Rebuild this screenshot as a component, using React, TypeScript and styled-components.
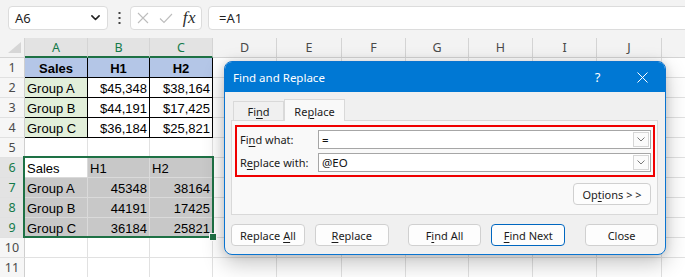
import React from "react";
import styled, { createGlobalStyle } from "styled-components";

const GlobalStyle = createGlobalStyle`
  html, body { margin: 0; padding: 0; background: #fff; }
  body { width: 685px; height: 277px; overflow: hidden; font-family: "Noto Sans", sans-serif; }
`;

const Screen = styled.div`
  position: relative;
  width: 685px;
  height: 277px;
  overflow: hidden;
  background: #fff;
  display: flex;
  flex-direction: column;
`;

/* ---------- formula bar ---------- */
const Toolbar = styled.div`
  height: 38px;
  flex: none;
  box-sizing: border-box;
  background: #f3f3f3;
  display: flex;
  align-items: flex-start;
  padding: 6px 0 0 8px;
`;

const Box = styled.div`
  height: 24px;
  box-sizing: border-box;
  background: #fff;
  border: 1px solid #dcdcdc;
  border-radius: 4px;
  display: flex;
  align-items: center;
`;

const NameBox = styled(Box)`
  width: 100px;
  flex: none;
  justify-content: space-between;
  padding: 0 7px 0 6px;
  font: 13px "Noto Sans", sans-serif;
  color: #1f1f1f;
`;

const DotsSlot = styled.div`
  width: 22px;
  height: 24px;
  flex: none;
  display: flex;
  align-items: center;
  justify-content: center;
`;

const FxBox = styled(Box)`
  width: 72px;
  flex: none;
`;

const IconSlot = styled.div`
  width: 24px;
  height: 22px;
  display: flex;
  align-items: center;
  justify-content: center;
`;

const FxText = styled.span`
  font: italic 17px "Liberation Serif", "DejaVu Serif", serif;
  color: #2b2b2b;
  letter-spacing: 0.5px;
`;

const FormulaInput = styled(Box)`
  flex: 1;
  margin-left: 6px;
  margin-right: -12px;
  padding-left: 10px;
  font: 13px "Noto Sans", sans-serif;
  color: #1f1f1f;
`;

/* ---------- sheet ---------- */
const colWidths = [63, 62, 63, 64, 65, 64, 63, 64, 64, 65, 40];
const colLetters = ["A", "B", "C", "D", "E", "F", "G", "H", "I", "J", ""];

const Sheet = styled.div`
  display: grid;
  grid-template-columns: 25px ${colWidths.map((w) => `${w}px`).join(" ")};
  grid-template-rows: 20px repeat(11, 20px);
  flex: none;
`;

const Corner = styled.div`
  grid-row: 1;
  grid-column: 1;
  box-sizing: border-box;
  background: #f3f3f3;
  border-right: 1px solid #d4d4d4;
  border-bottom: 1px solid #d4d4d4;
  display: flex;
  align-items: flex-end;
  justify-content: flex-end;
  padding: 0 3px 4px 0;
`;

const ColHeader = styled.div<{ $selected?: boolean; $col: number }>`
  grid-row: 1;
  grid-column: ${(p) => p.$col};
  box-sizing: border-box;
  display: flex;
  align-items: center;
  justify-content: center;
  background: ${(p) => (p.$selected ? "#e3e3e3" : "#f3f3f3")};
  color: ${(p) => (p.$selected ? "#137a4a" : "#4a4a4a")};
  border-right: 1px solid #d4d4d4;
  border-bottom: ${(p) => (p.$selected ? "2px solid #1e7145" : "1px solid #d4d4d4")};
  font: 12.5px "Noto Sans", sans-serif;
`;

const RowHeader = styled.div<{ $selected?: boolean; $row: number }>`
  grid-row: ${(p) => p.$row};
  grid-column: 1;
  box-sizing: border-box;
  display: flex;
  align-items: center;
  justify-content: center;
  background: ${(p) => (p.$selected ? "#e3e3e3" : "#f6f6f6")};
  color: ${(p) => (p.$selected ? "#137a4a" : "#4a4a4a")};
  border-right: 1px solid #cfcfcf;
  border-bottom: 1px solid #e1e1e1;
  font: 12.5px "Noto Sans", sans-serif;
`;

type Align = "left" | "center" | "right";

const Cell = styled.div<{
  $row: number;
  $col: number;
  $bg?: string;
  $align?: Align;
  $bold?: boolean;
  $boxed?: boolean;
  $sel?: boolean;
}>`
  grid-row: ${(p) => p.$row};
  grid-column: ${(p) => p.$col};
  box-sizing: border-box;
  display: flex;
  align-items: center;
  justify-content: ${(p) =>
    p.$align === "right" ? "flex-end" : p.$align === "center" ? "center" : "flex-start"};
  padding: 1px 2px 0 2px;
  background: ${(p) => p.$bg ?? (p.$sel ? "#c8c8c8" : "#fff")};
  border-right: 1px solid ${(p) => (p.$boxed ? "#000" : p.$sel ? "#dadada" : "#e1e1e1")};
  border-bottom: 1px solid ${(p) => (p.$boxed ? "#000" : p.$sel ? "#dadada" : "#e1e1e1")};
  font: ${(p) => (p.$bold ? 700 : 400)} 13px "Liberation Sans", Arial, sans-serif;
  color: #000;
  white-space: nowrap;
  overflow: hidden;
`;

const SelectionFrame = styled.div`
  grid-column: 2 / 5;
  grid-row: 7 / 11;
  margin: -2px -1px 0 -2px;
  border: 2px solid #1e7145;
  position: relative;
  pointer-events: none;
  z-index: 1;
`;

const FillHandle = styled.div`
  position: absolute;
  right: -5px;
  bottom: -5px;
  width: 6px;
  height: 6px;
  background: #1e7145;
  border: 1px solid #fff;
`;

type CellData = {
  t?: string;
  align?: Align;
  bold?: boolean;
  bg?: string;
  boxed?: boolean;
  sel?: boolean;
};

const BLUE = "#b4c6e7";
const GREEN = "#e2efda";

const data: Record<number, CellData[]> = {
  1: [
    { t: "Sales", align: "center", bold: true, bg: BLUE, boxed: true },
    { t: "H1", align: "center", bold: true, bg: BLUE, boxed: true },
    { t: "H2", align: "center", bold: true, bg: BLUE, boxed: true },
  ],
  2: [
    { t: "Group A", bg: GREEN, boxed: true },
    { t: "$45,348", align: "right", boxed: true },
    { t: "$38,164", align: "right", boxed: true },
  ],
  3: [
    { t: "Group B", bg: GREEN, boxed: true },
    { t: "$44,191", align: "right", boxed: true },
    { t: "$17,425", align: "right", boxed: true },
  ],
  4: [
    { t: "Group C", bg: GREEN, boxed: true },
    { t: "$36,184", align: "right", boxed: true },
    { t: "$25,821", align: "right", boxed: true },
  ],
  6: [
    { t: "Sales", sel: true, bg: "#fff" },
    { t: "H1", sel: true },
    { t: "H2", sel: true },
  ],
  7: [
    { t: "Group A", sel: true },
    { t: "45348", align: "right", sel: true },
    { t: "38164", align: "right", sel: true },
  ],
  8: [
    { t: "Group B", sel: true },
    { t: "44191", align: "right", sel: true },
    { t: "17425", align: "right", sel: true },
  ],
  9: [
    { t: "Group C", sel: true },
    { t: "36184", align: "right", sel: true },
    { t: "25821", align: "right", sel: true },
  ],
};

/* ---------- dialog ---------- */
const Dialog = styled.div`
  position: absolute;
  left: 224px;
  top: 61px;
  width: 442px;
  height: 194px;
  box-sizing: border-box;
  border: 1px solid #0a74d0;
  border-radius: 8px;
  background: #f0f0f0;
  box-shadow: 0 8px 22px rgba(0, 0, 0, 0.24), 0 0 8px rgba(0, 0, 0, 0.12);
  display: flex;
  flex-direction: column;
  overflow: hidden;
  z-index: 2;
  font: 11px "Noto Sans", sans-serif;
  color: #1b1b1b;
`;

const TitleBar = styled.div`
  height: 30px;
  flex: none;
  background: #0078d4;
  color: #fff;
  display: flex;
  align-items: center;
  padding-left: 8px;
`;

const Title = styled.div`
  flex: 1;
  font-size: 11.5px;
  padding-top: 1px;
`;

const CaptionButton = styled.div`
  width: 45px;
  height: 30px;
  display: flex;
  align-items: center;
  justify-content: center;
  font-size: 13px;
  color: #fff;
`;

const Body = styled.div`
  flex: 1;
  display: flex;
  flex-direction: column;
  padding: 7px 7px 0 6px;
`;

const TabRow = styled.div`
  height: 22px;
  display: flex;
  align-items: flex-end;
  padding-left: 2px;
  margin-bottom: -1px;
  position: relative;
  z-index: 1;
`;

const Tab = styled.div<{ $active?: boolean; $w: number }>`
  width: ${(p) => p.$w}px;
  height: ${(p) => (p.$active ? 22 : 20)}px;
  box-sizing: border-box;
  border: 1px solid #d9d9d9;
  border-bottom: ${(p) => (p.$active ? "none" : "1px solid #d9d9d9")};
  background: ${(p) => (p.$active ? "#f9f9f9" : "#f0f0f0")};
  display: flex;
  align-items: center;
  justify-content: center;
  padding-top: ${(p) => (p.$active ? 1 : 0)}px;
`;

const Panel = styled.div`
  height: 95px;
  box-sizing: border-box;
  border: 1px solid #d9d9d9;
  background: #f9f9f9;
  padding: 4px 2px 0 3px;
  display: flex;
  flex-direction: column;
`;

const Highlight = styled.div`
  border: 2px solid #f00000;
  padding: 3px 2px 3px 3px;
  display: grid;
  grid-template-columns: 78px 1fr;
  row-gap: 4px;
  align-items: center;
`;

const Label = styled.div`
  white-space: nowrap;
`;

const Combo = styled.div`
  height: 19px;
  box-sizing: border-box;
  border: 1px solid #a6a6a6;
  background: #fff;
  display: flex;
  align-items: stretch;
`;

const ComboText = styled.div`
  flex: 1;
  padding-left: 3px;
  display: flex;
  align-items: center;
  font-size: 11.5px;
  color: #111;
`;

const ComboButton = styled.div`
  width: 16px;
  margin: 1px;
  box-sizing: border-box;
  border: 1px solid #d6d6d6;
  background: #fbfbfb;
  display: flex;
  align-items: center;
  justify-content: center;
`;

const OptionsRow = styled.div`
  display: flex;
  justify-content: flex-end;
  margin-top: 6px;
  padding-right: 4px;
`;

const ButtonRow = styled.div`
  display: flex;
  margin-top: 9px;
`;

const Button = styled.div<{ $w?: number; $gap?: number; $default?: boolean }>`
  width: ${(p) => p.$w ?? 74}px;
  height: 22px;
  margin-left: ${(p) => p.$gap ?? 0}px;
  box-sizing: border-box;
  border: 1px solid ${(p) => (p.$default ? "#0067c0" : "#d0d0d0")};
  border-radius: 4px;
  background: #fdfdfd;
  display: flex;
  align-items: center;
  justify-content: center;
  white-space: nowrap;
`;

const Caption = styled.span`
  white-space: pre;
`;

const Key = styled.span`
  text-decoration: underline;
  text-underline-offset: 2px;
`;

const Chevron = ({ color = "#222", w = 10, sw = 1.6 }: { color?: string; w?: number; sw?: number }) => (
  <svg width={w} height={w * 0.6} viewBox="0 0 10 6" fill="none">
    <path d="M1 1 L5 5 L9 1" stroke={color} strokeWidth={sw} strokeLinecap="round" strokeLinejoin="round" />
  </svg>
);

export default function App() {
  const rows = Array.from({ length: 11 }, (_, i) => i + 1);
  return (
    <>
      <GlobalStyle />
      <Screen>
        <Toolbar>
          <NameBox>
            <span>A6</span>
            <Chevron w={9} sw={1.8} />
          </NameBox>
          <DotsSlot>
            <svg width="3" height="12" viewBox="0 0 3 12">
              <rect x="0.5" y="0" width="2" height="2" fill="#444" />
              <rect x="0.5" y="5" width="2" height="2" fill="#444" />
              <rect x="0.5" y="10" width="2" height="2" fill="#444" />
            </svg>
          </DotsSlot>
          <FxBox>
            <IconSlot>
              <svg width="12" height="12" viewBox="0 0 12 12">
                <path d="M1 1 L11 11 M11 1 L1 11" stroke="#bdbdbd" strokeWidth="1.1" />
              </svg>
            </IconSlot>
            <IconSlot>
              <svg width="14" height="11" viewBox="0 0 14 11">
                <path d="M1 5.5 L5 9.5 L13 1" stroke="#bdbdbd" strokeWidth="1.1" fill="none" />
              </svg>
            </IconSlot>
            <IconSlot>
              <FxText>fx</FxText>
            </IconSlot>
          </FxBox>
          <FormulaInput>=A1</FormulaInput>
        </Toolbar>

        <Sheet>
          <Corner>
            <svg width="13" height="11" viewBox="0 0 13 11">
              <polygon points="13,0 13,11 0,11" fill="#d6d6d6" />
            </svg>
          </Corner>
          {colLetters.map((l, i) => (
            <ColHeader key={`h${i}`} $col={i + 2} $selected={i < 3}>
              {l}
            </ColHeader>
          ))}
          {rows.map((r) => (
            <React.Fragment key={`r${r}`}>
              <RowHeader $row={r + 1} $selected={r >= 6 && r <= 9}>
                {r}
              </RowHeader>
              {colLetters.map((_, c) => {
                const d = data[r]?.[c];
                return (
                  <Cell
                    key={`c${r}-${c}`}
                    $row={r + 1}
                    $col={c + 2}
                    $bg={d?.bg}
                    $align={d?.align}
                    $bold={d?.bold}
                    $boxed={d?.boxed}
                    $sel={d?.sel}
                  >
                    {d?.t}
                  </Cell>
                );
              })}
            </React.Fragment>
          ))}
          <SelectionFrame>
            <FillHandle />
          </SelectionFrame>
        </Sheet>

        <Dialog>
          <TitleBar>
            <Title>Find and Replace</Title>
            <CaptionButton>?</CaptionButton>
            <CaptionButton>
              <svg width="11" height="11" viewBox="0 0 11 11">
                <path d="M0.5 0.5 L10.5 10.5 M10.5 0.5 L0.5 10.5" stroke="#fff" strokeWidth="1" />
              </svg>
            </CaptionButton>
          </TitleBar>
          <Body>
            <TabRow>
              <Tab $w={51}>
                <Caption>
                  Fi<Key>n</Key>d
                </Caption>
              </Tab>
              <Tab $w={61} $active>
                <Caption>
                  Re<Key>p</Key>lace
                </Caption>
              </Tab>
            </TabRow>
            <Panel>
              <Highlight>
                <Label>
                  Fi<Key>n</Key>d what:
                </Label>
                <Combo>
                  <ComboText>=</ComboText>
                  <ComboButton>
                    <Chevron color="#555" w={8} sw={1} />
                  </ComboButton>
                </Combo>
                <Label>
                  R<Key>e</Key>place with:
                </Label>
                <Combo>
                  <ComboText>@EO</ComboText>
                  <ComboButton>
                    <Chevron color="#555" w={8} sw={1} />
                  </ComboButton>
                </Combo>
              </Highlight>
              <OptionsRow>
                <Button $w={78}>
                  <Caption>
                    Op<Key>t</Key>ions {">"} {">"}
                  </Caption>
                </Button>
              </OptionsRow>
            </Panel>
            <ButtonRow>
              <Button>
                <Caption>
                  Replace <Key>A</Key>ll
                </Caption>
              </Button>
              <Button $gap={10}>
                <Caption>
                  <Key>R</Key>eplace
                </Caption>
              </Button>
              <Button $gap={19}>
                <Caption>
                  F<Key>i</Key>nd All
                </Caption>
              </Button>
              <Button $gap={10} $default>
                <Caption>
                  <Key>F</Key>ind Next
                </Caption>
              </Button>
              <Button $gap={20} $w={73}>
                <Caption>Close</Caption>
              </Button>
            </ButtonRow>
          </Body>
        </Dialog>
      </Screen>
    </>
  );
}
